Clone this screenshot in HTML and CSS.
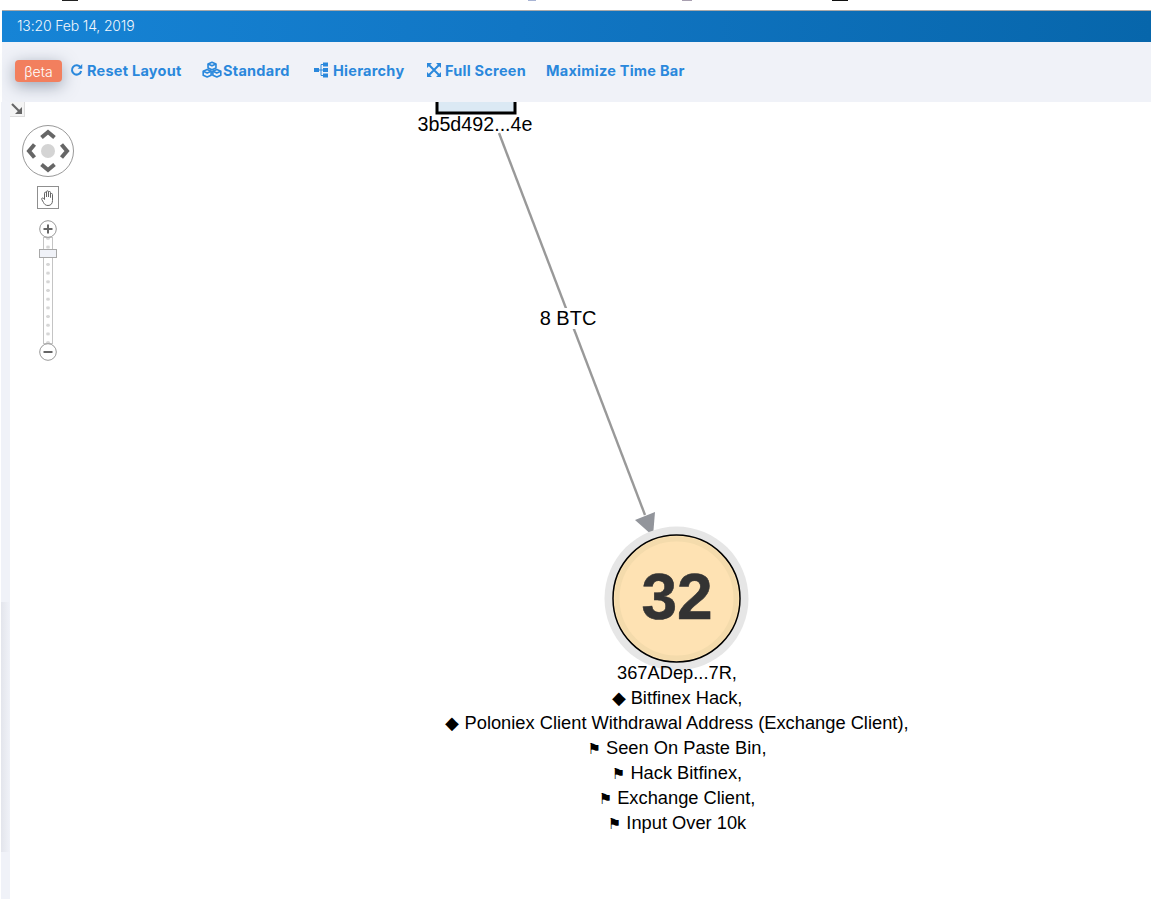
FILE: index.html
```html
<!DOCTYPE html>
<html lang="en">
<head>
<meta charset="utf-8">
<title>Graph</title>
<link rel="stylesheet" href="styles.css">
</head>
<body>
<div class="clip-strip">
  <span class="frag frag-a"></span>
  <span class="frag frag-b"></span>
  <span class="frag frag-c"></span>
  <span class="frag frag-d"></span>
</div>
<header class="titlebar"><span class="stamp">13:20 Feb 14, 2019</span></header>
<nav class="toolbar">
  <span class="beta">βeta</span>
  <a class="tool tool-reset">
    <svg class="ico" viewBox="0 0 14 14" width="13" height="14"><path d="M11.3 4.2A5 5 0 1 0 12 8" fill="none" stroke="currentColor" stroke-width="2.200"/><path d="M8.2 5.6h5V.6z" fill="currentColor"/></svg>
    Reset Layout</a>
  <a class="tool tool-standard">
    <svg class="ico" viewBox="0 0 20 16" width="22" height="18"><g fill="none" stroke="currentColor" stroke-width="1.500" stroke-linejoin="round"><path d="M10 1l3.600 1.600v3.600L10 7.800 6.400 6.200V2.600z"/><path d="M5.600 7.600l3.600 1.600v3.600L5.600 14.400 2 12.800V9.200z"/><path d="M14.400 7.600L18 9.200v3.600l-3.600 1.600-3.600-1.600V9.200z"/><path d="M6.400 2.600L10 4.200l3.600-1.600M2 9.200l3.600 1.600 3.600-1.600M10.800 9.200l3.600 1.600L18 9.200"/></g></svg>
    Standard</a>
  <a class="tool tool-hierarchy">
    <svg class="ico" viewBox="0 0 14 16" width="14" height="16"><g fill="currentColor"><rect x="0" y="6" width="5" height="4"/><rect x="9" y="0.500" width="5" height="4"/><rect x="9" y="6" width="5" height="4"/><rect x="9" y="11.500" width="5" height="4"/></g><path d="M5 8h4M7 2.500v11M7 2.500h2M7 13.500h2" fill="none" stroke="currentColor" stroke-width="1"/></svg>
    Hierarchy</a>
  <a class="tool tool-full">
    <svg class="ico" viewBox="0 0 14 14" width="14" height="14"><g fill="currentColor"><path d="M0 0h5L0 5zM14 0v5L9 0zM0 14V9l5 5zM14 14H9l5-5z"/></g><path d="M2 2l10 10M12 2L2 12" stroke="currentColor" stroke-width="2"/></svg>
    Full Screen</a>
  <a class="tool tool-max">Maximize Time Bar</a>
</nav>
<main class="workspace">
  <aside class="rail"></aside>
  <section class="canvas">
    <span class="corner">
      <svg viewBox="0 0 14 14" width="14" height="14"><path d="M2 2l8 8" stroke="#666" stroke-width="2.200"/><path d="M12 5v7H5z" fill="#666"/></svg>
    </span>
    <svg class="graph" viewBox="0 0 1141 797" width="1141" height="797">
      <rect class="box" x="427" y="-10" width="78" height="21"/>
      <line class="edge" x1="489" y1="31" x2="635" y2="413"/>
      <path class="head" d="M625 418L645 410L643 434z"/>
      <circle class="halo" cx="666.500" cy="496.500" r="72"/>
      <circle class="disc" cx="666.500" cy="496.500" r="63.500"/>
      <circle class="inner" cx="666.500" cy="496.500" r="59.500"/>
      <text class="count" x="667" y="517">32</text>
      <text class="lbl lbl-top" x="465" y="29">3b5d492...4e</text>
      <rect class="edge-bg" x="529" y="206" width="58" height="21"/>
      <text class="lbl lbl-edge" x="558" y="223">8 BTC</text>
      <text class="lbl" x="667" y="577">367ADep...7R,</text>
      <text class="lbl" x="667" y="602">◆ Bitfinex Hack,</text>
      <text class="lbl" x="667" y="627">◆ Poloniex Client Withdrawal Address (Exchange Client),</text>
      <text class="lbl" x="667" y="652"><tspan class="flag">⚑</tspan> Seen On Paste Bin,</text>
      <text class="lbl" x="667" y="677"><tspan class="flag">⚑</tspan> Hack Bitfinex,</text>
      <text class="lbl" x="667" y="702"><tspan class="flag">⚑</tspan> Exchange Client,</text>
      <text class="lbl" x="667" y="727"><tspan class="flag">⚑</tspan> Input Over 10k</text>
    </svg>
    <div class="nav-widget">
      <svg viewBox="0 0 54 54" width="54" height="54">
        <circle cx="27" cy="27" r="25.500" fill="#fff" stroke="#999"/>
        <circle cx="27" cy="27" r="7" fill="#d4d4d4"/>
        <g fill="none" stroke="#666" stroke-width="4"><path d="M20.500 13.500l6.500-5.500 6.500 5.500M20.500 40.500l6.500 5.500 6.500-5.500M13.500 20.500L8 27l5.500 6.500M40.500 20.500L46 27l-5.500 6.500"/></g>
      </svg>
      <span class="hand">
        <svg viewBox="0 0 16 18" width="16" height="18"><path d="M4.500 10.500V4.200a1 1 0 0 1 2 0V8V2.800a1 1 0 0 1 2 0V8V3.500a1 1 0 0 1 2 0V8.500V5.500a1 1 0 0 1 2 0v6c0 3-1.500 5-4.500 5-2.500 0-3.500-1.200-4.500-3L1.800 10.500c-.7-1.200 1-2.200 1.800-1.100z" fill="#fff" stroke="#666" stroke-width="1"/></svg>
      </span>
      <div class="slider">
        <span class="zoom-btn"><svg viewBox="0 0 18 18" width="18" height="18"><circle cx="9" cy="9" r="8.300" fill="#fff" stroke="#999"/><path d="M4.500 9h9M9 4.500v9" stroke="#666" stroke-width="2"/></svg></span>
        <span class="track"><span class="thumb"></span></span>
        <span class="zoom-btn"><svg viewBox="0 0 18 18" width="18" height="18"><circle cx="9" cy="9" r="8.300" fill="#fff" stroke="#999"/><path d="M4.500 9h9" stroke="#666" stroke-width="2"/></svg></span>
      </div>
    </div>
  </section>
</main>
</body>
</html>
```
FILE: styles.css
```css
* { box-sizing: border-box; }
html, body { margin: 0; height: 100%; background: #fff; overflow: hidden; }
body { width: 1151px; height: 899px; display: flex; flex-direction: column; font-family: "Inter", "Open Sans", sans-serif; }

.clip-strip { height: 10px; position: relative; flex: none; }
.frag { position: absolute; top: 0; height: 1px; }
.frag-a { left: 62px; width: 16px; background: #222; }
.frag-b { left: 528px; width: 8px; background: #a8b4d4; }
.frag-c { left: 682px; width: 10px; background: #a89fb0; }
.frag-d { left: 832px; width: 16px; background: #111; }

.titlebar {
  flex: none; height: 32px; margin-left: 2px;
  border-top: 1px solid #a9a9a9;
  background: linear-gradient(90deg, #1684d6 0%, #1176c4 45%, #0766ab 100%);
  display: flex; align-items: center; padding: 0 0 3px 15px;
}
.stamp { color: #f2f7fc; font-size: 14px; font-weight: 300; letter-spacing: -0.15px; }

.toolbar {
  flex: none; height: 60px; margin-left: 2px;
  background: #f0f2f8;
  display: flex; align-items: center;
  font-size: 14.500px; font-weight: 700; letter-spacing: .25px; color: #2a88dc;
  position: relative;
}
.beta {
  position: absolute; left: 13px; top: 18px; width: 47px; height: 22px;
  background: #f27f5e; color: #fff; border-radius: 4px;
  font-size: 14px; font-weight: 300; letter-spacing: 0;
  display: flex; align-items: center; justify-content: center;
  box-shadow: 0 4px 16px rgba(70, 85, 110, .5);
}
.tool { display: flex; align-items: center; white-space: nowrap; position: absolute; top: 18px; height: 20px; }
.ico { flex: none; }
.tool-reset { left: 68px; gap: 4px; }
.tool-standard { left: 199px; gap: 0; }
.tool-hierarchy { left: 312px; gap: 5px; }
.tool-full { left: 425px; gap: 4px; }
.tool-max { left: 544px; }

.workspace { flex: 1; display: flex; min-height: 0; }
.rail {
  flex: none; width: 9px; margin-left: 1px;
  background: linear-gradient(90deg, #e3e5ec, #f0f2f8) 0 500px / 100% 250px no-repeat, #f0f2f8;
}
.canvas { flex: 1; position: relative; background: #fff; overflow: hidden; }

.corner {
  position: absolute; left: 0; top: 0; width: 15px; height: 15px;
  background: #f4f4f4; border: 1px solid #ddd; border-width: 0 1px 1px 0;
  display: flex; align-items: center; justify-content: center;
}

.graph { position: absolute; left: 0; top: 0; display: block; }
.box { fill: #dbe9f4; stroke: #000; stroke-width: 3; }
.edge { stroke: #999; stroke-width: 2.400; }
.head { fill: #92959b; }
.halo { fill: #e6e6e6; }
.disc { fill: #fde3b4; stroke: #000; stroke-width: 1.500; }
.inner { fill: #fee2b3; stroke: #f4dbac; stroke-width: 5; }
.count { font-family: "Liberation Sans", Arial, sans-serif; font-weight: 700; font-size: 64px; fill: #333; stroke: #333; stroke-width: .6; text-anchor: middle; }
.lbl { font-family: "Liberation Sans", Arial, sans-serif; font-size: 18.300px; fill: #000; text-anchor: middle; }
.lbl-top { font-size: 19.700px; }
.lbl-edge { font-size: 20px; }
.edge-bg { fill: #fff; }
.flag { font-family: "DejaVu Sans", sans-serif; font-size: 15px; }

.nav-widget {
  position: absolute; left: 11px; top: 22px; width: 54px;
  display: flex; flex-direction: column; align-items: center;
}
.nav-widget > svg { display: block; }
.hand {
  margin-top: 8px; width: 22px; height: 23px;
  border: 1px solid #8f8f8f; background: #fff;
  display: flex; align-items: center; justify-content: center;
}
.slider { margin-top: 11px; display: flex; flex-direction: column; align-items: center; }
.zoom-btn { display: block; width: 18px; height: 18px; position: relative; z-index: 1; }
.zoom-btn svg { display: block; }
.track {
  display: block; position: relative; width: 10px; height: 107px; margin: -1px 0;
  border: 1px solid #c4c4c4; background: #fff;
  background-image: radial-gradient(circle, #d6d6d6 1.500px, transparent 2px);
  background-size: 8px 8.700px; background-position: center;
}
.thumb {
  position: absolute; left: -5px; top: 11px; width: 18px; height: 9px;
  background: #f0f2f8; border: 1px solid #a8a8a8;
}
```
